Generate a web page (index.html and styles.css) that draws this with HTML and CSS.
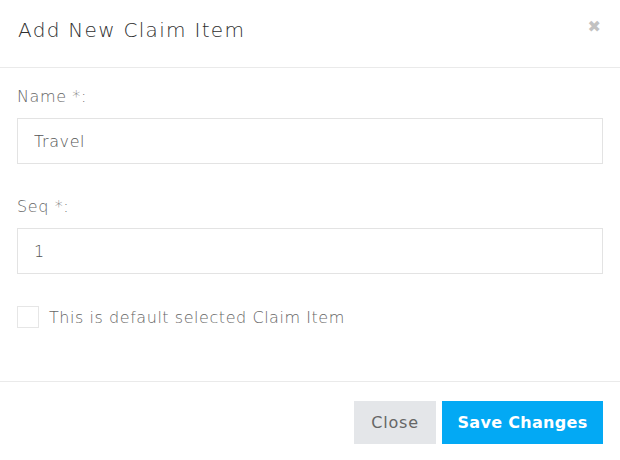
FILE: index.html
```html
<!DOCTYPE html>
<html>
<head>
<meta charset="utf-8">
<link rel="stylesheet" href="styles.css">
</head>
<body>
<div class="modal">
  <div class="modal-header">
    <h4 class="modal-title">Add New Claim Item</h4>
    <span class="close">&#x2716;</span>
  </div>
  <div class="modal-body">
    <div class="form-group">
      <label class="label">Name *:</label>
      <input class="input" type="text" value="Travel">
    </div>
    <div class="form-group">
      <label class="label">Seq *:</label>
      <input class="input" type="text" value="1">
    </div>
    <div class="check-row">
      <span class="checkbox"></span>
      <span class="check-label">This is default selected Claim Item</span>
    </div>
  </div>
  <div class="modal-footer">
    <button class="btn btn-close">Close</button>
    <button class="btn btn-save">Save Changes</button>
  </div>
</div>
</body>
</html>
```
FILE: styles.css
```css
* { box-sizing: border-box; }
body {
  margin: 0;
  background: #fff;
  font-family: "DejaVu Sans", "Open Sans", sans-serif;
}
.modal {
  width: 620px;
  height: 460px;
  background: #fff;
  display: flex;
  flex-direction: column;
}
.modal-header {
  height: 68px;
  border-bottom: 1px solid #eaeaea;
  display: flex;
  align-items: flex-start;
  justify-content: space-between;
  padding: 16px 18px 0 18px;
}
.modal-title {
  margin: 0;
  font-size: 20px;
  font-weight: 200;
  color: #2f2f2f;
  line-height: 28px;
  letter-spacing: 1.3px;
}
.close {
  color: #c2c2c2;
  font-size: 16px;
  line-height: 16px;
  margin-top: 3px;
  margin-right: 1px;
}
.modal-body {
  padding: 18px 17px 0 17px;
  height: 313px;
}
.form-group {
  display: flex;
  flex-direction: column;
  margin-bottom: 32px;
}
.label {
  font-size: 16px;
  line-height: 22px;
  color: #666;
  font-weight: 200;
  margin-bottom: 10px;
  letter-spacing: 0.6px;
}
.input {
  height: 46px;
  border: 1px solid #e3e3e3;
  padding: 0 16px;
  font-family: inherit;
  font-size: 16px;
  font-weight: 200;
  color: #555;
  outline: none;
  letter-spacing: 0.6px;
}
.check-row {
  display: flex;
  align-items: center;
  gap: 10px;
  margin-top: 1px;
}
.checkbox {
  width: 22px;
  height: 22px;
  border: 1px solid #e6e6e6;
  display: inline-block;
}
.check-label {
  font-size: 16px;
  font-weight: 200;
  color: #666;
  letter-spacing: 0.55px;
}
.modal-footer {
  border-top: 1px solid #eaeaea;
  display: flex;
  justify-content: flex-end;
  gap: 6px;
  padding: 19px 17px 0 17px;
}
.btn {
  height: 43px;
  border: none;
  font-family: inherit;
  font-size: 16px;
  padding: 0;
}
.btn-close {
  width: 82px;
  background: #e4e6e9;
  color: #666;
  font-weight: 500;
  letter-spacing: 0.8px;
}
.btn-save {
  width: 161px;
  background: #03a9f4;
  color: #fff;
  font-weight: 600;
  letter-spacing: 0.3px;
}
```
